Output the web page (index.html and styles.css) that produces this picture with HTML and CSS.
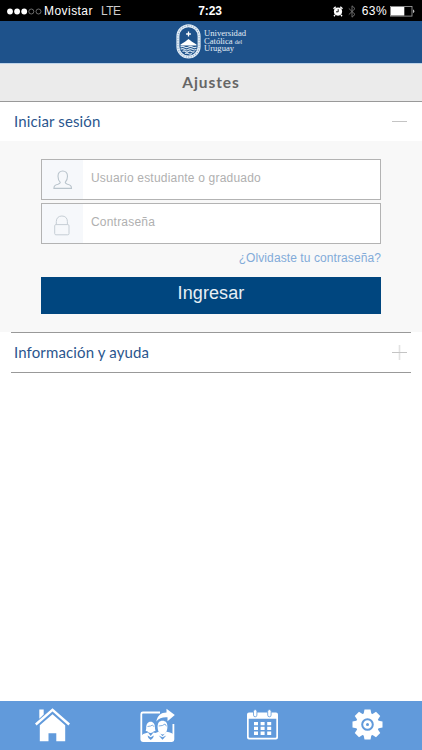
FILE: index.html
```html
<!DOCTYPE html>
<html lang="es">
<head>
    <title>Ajustes</title>
    <meta charset="UTF-8">
    <meta name="viewport" content="width=device-width, initial-scale=1">
    <link rel="stylesheet" href="styles.css">
</head>
<body>
    <div class="status-bar">
        <div class="status-left">
            <svg class="signal" width="35" height="7" viewBox="0 0 35 7">
                <g fill="#fff"><circle cx="3" cy="3.5" r="2.9"/><circle cx="10.1" cy="3.5" r="2.9"/><circle cx="17.2" cy="3.5" r="2.9"/></g>
                <g fill="none" stroke="#999" stroke-width=".7"><circle cx="24.3" cy="3.5" r="2.5"/><circle cx="31.5" cy="3.5" r="2.5"/></g>
            </svg>
            <span class="carrier">Movistar</span>
            <span class="network">LTE</span>
        </div>
        <span class="time">7:23</span>
        <div class="status-right">
            <svg class="alarm" width="10" height="11" viewBox="0 0 10 11">
                <circle cx="5" cy="5.6" r="4.1" fill="#fff"/>
                <path d="M.5 2.7 2.7.8M9.5 2.7 7.3.8M2 9 1 10.2M8 9l1 1.2" stroke="#fff" stroke-width="1.4"/>
                <path d="M5.2 3.2v2.6H3" fill="none" stroke="#000" stroke-width=".9"/>
            </svg>
            <svg class="bluetooth" width="8" height="13" viewBox="0 0 8 13">
                <path d="M.8 3.4 7 9.4 4 12.2V.8L7 3.6.8 9.6" fill="none" stroke="#777" stroke-width=".9"/>
            </svg>
            <span class="percent">63%</span>
            <svg class="battery" width="25" height="11" viewBox="0 0 25 11">
                <rect x=".4" y=".4" width="21.6" height="9.7" fill="none" stroke="#aaa" stroke-width=".8"/>
                <rect x="1" y="1" width="13.3" height="8.5" fill="#fff"/>
                <path d="M23 3.5q1.3.3 1.3 1.8T23 7z" fill="#bbb"/>
            </svg>
        </div>
    </div>

    <header class="header">
        <svg class="shield" width="25" height="35" viewBox="0 0 25 35">
            <rect x="1.9" y="1.7" width="21.2" height="31.4" rx="10.6" fill="none" stroke="#e3edf6" stroke-width="3"/>
            <rect x="1.9" y="1.7" width="21.2" height="31.4" rx="10.6" fill="none" stroke="#8eabc9" stroke-width="1.2" stroke-dasharray="1 1.5"/>
            <path d="M12.5 7.6v4.8M10.1 10h4.8" stroke="#fff" stroke-width="1.3"/>
            <path d="M4.5 20.5 9 17.7l3.5-2.6 3.5 2.6 4.500 2.800v.9h-16z" fill="#fff"/>
            <path d="M4.500 23q2-1.300 4 0t4 0 4 0 4 0M4.500 25.300q2-1.300 4 0t4 0 4 0 4 0M6.500 27.500q1.500-1.200 3 0t3 0 3 0 3 0M9 29.600q1.800-1 3.500 0t3.500 0" fill="none" stroke="#d6e4f1" stroke-width="1.1"/>
        </svg>
        <div class="brand">
            <span>Universidad</span>
            <span>Católica <small>del</small></span>
            <span>Uruguay</span>
        </div>
    </header>

    <h1 class="title">Ajustes</h1>

    <main>
        <div class="row">
            <h2>Iniciar sesión</h2>
            <svg width="15" height="15" viewBox="0 0 15 15"><path d="M0 7.5h15" stroke="#c4c4c4"/></svg>
        </div>
        <form class="login">
            <label class="field">
                <span class="field-icon">
                    <svg width="20" height="20" viewBox="0 0 20 20">
                        <path d="M7.3 12.3C5.5 10.7 5 8.7 5 6.3 5 3 6.9 1 9.7 1s4.8 2 4.8 5.300c0 2.400-.6 4.400-2.300 6 .1 1.200.7 1.500 2.300 2 2.800.8 4 1.200 4 4.100H.9c0-2.900 1.300-3.300 4.100-4.100 1.600-.5 2.200-.8 2.300-2z" fill="none" stroke="#b9c4cc" stroke-width="1.1"/>
                    </svg>
                </span>
                <input type="text" placeholder="Usuario estudiante o graduado">
            </label>
            <label class="field">
                <span class="field-icon lock">
                    <svg width="16" height="21" viewBox="0 0 16 21">
                        <rect x=".7" y="9.6" width="14.3" height="10.2" rx="1.2" fill="none" stroke="#c6ced5"/>
                        <path d="M2.3 9.600V6.600C2.300 3 4.600 1 7.900 1s5.500 2 5.500 5.600v3" fill="none" stroke="#c6ced5"/>
                    </svg>
                </span>
                <input type="password" placeholder="Contraseña">
            </label>
            <a class="forgot">¿Olvidaste tu contraseña?</a>
            <button type="button">Ingresar</button>
        </form>
        <div class="row help">
            <h2>Información y ayuda</h2>
            <svg width="15" height="15" viewBox="0 0 15 15"><path d="M7.5 0v15" stroke="#e2e2e2" stroke-width="1.6"/><path d="M0 7.5h15" stroke="#c4c4c4"/></svg>
        </div>
    </main>

    <nav class="tabs">
        <a>
            <svg width="35" height="34" viewBox="0 0 35 34" fill="#fff">
                <path d="M4.3 1.5h4.400v5L4.300 10.700z"/>
                <path d="M.8 16.500 17.500 1.800l16.700 14.700" fill="none" stroke="#fff" stroke-width="2.4"/>
                <path d="M4.800 17.300 17.500 6.200l12.700 11.100v15.900h-8.900v-7.900h-7.800v7.900H4.800z"/>
            </svg>
        </a>
        <a>
            <svg width="35" height="34" viewBox="0 0 35 34" fill="#fff">
                <path d="M20 4.500H2.900Q1.300 4.500 1.300 6v25.500q0 1.500 1.600 1.500h29q1.500 0 1.500-1.500V16" fill="none" stroke="#fff" stroke-width="1.8"/>
                <path d="M16.300 13.500c1.200-6 4.700-9 10.200-9V.7l8.300 6.200-7.300 6.400V9.300c-5-.3-8.500.8-11.200 4.200z"/>
                <path d="M6.200 20.500c0-4.500 1.600-6.700 4.400-6.700s4.400 2.200 4.400 6.700l.5 2.400q-2 0-2.600 1.300-2.300 1.600-4.600 0-.6-1.300-2.600-1.300z"/>
                <path d="M17.600 18.700c0-4 1.800-6 4.900-6s4.900 2 4.900 6c0 4.500-2 7.700-4.900 7.700s-4.900-3.200-4.900-7.700z"/>
                <path d="M7.500 18.500q3.700-.2 5-1.500l1.500 1.800M18.700 18q4.200 0 6.300-2l1.500 2.300" fill="none" stroke="#619adb" stroke-width=".8"/>
                <path d="M1.500 28q1-2.500 5-3l1.500-.5 2.700 3.500 2.700-3.500 2 .6 3.300-1.300 3.800 4.500 4-4.500q6 .8 7 3.200v6h-32z"/>
                <path d="M7.500 27.500q.3 3 3.200 4.500 2.900-1.500 3.200-4.500l-3.200 1.800zM18.700 27.500l3.800 4.300 3.800-4.300-3.800 1.800z" fill="#619adb"/>
            </svg>
        </a>
        <a>
            <svg width="31" height="32" viewBox="0 0 31 32">
                <path d="M2 3.500h27q2 0 2 2v23q0 2-2 2H2q-2 0-2-2v-23q0-2 2-2zM1.700 9.800v18q0 1 1 1h25.600q1 0 1-1v-18z" fill="#fff" fill-rule="evenodd"/>
                <g fill="#fff" stroke="#619adb" stroke-width=".8"><rect x="6.500" y=".6" width="3.4" height="7.2" rx="1.7"/><rect x="20.700" y=".6" width="3.4" height="7.2" rx="1.7"/></g>
                <path d="M7 13h4v3.300H7zm6.600 0h4v3.300h-4zm6.600 0h4v3.300h-4zM7 17.800h4v3.300H7zm6.600 0h4v3.300h-4zm6.600 0h4v3.300h-4zM7 22.600h4v3.300H7zm6.600 0h4v3.300h-4zm6.600 0h4v3.300h-4z" fill="#fff"/>
            </svg>
        </a>
        <a>
            <svg width="31" height="31" viewBox="-15.5 -15.5 31 31">
                <g fill="#fff">
                    <circle r="11.5"/>
                    <path id="tooth" d="M-3-15h6l1 5h-8z"/>
                    <use href="#tooth" transform="rotate(45)"/>
                    <use href="#tooth" transform="rotate(90)"/>
                    <use href="#tooth" transform="rotate(135)"/>
                    <use href="#tooth" transform="rotate(180)"/>
                    <use href="#tooth" transform="rotate(225)"/>
                    <use href="#tooth" transform="rotate(270)"/>
                    <use href="#tooth" transform="rotate(315)"/>
                </g>
                <circle r="5.3" fill="none" stroke="#619adb" stroke-width="2"/>
                <circle r="1.5" fill="#619adb"/>
            </svg>
        </a>
    </nav>
</body>
</html>
```
FILE: styles.css
```css
* {
    box-sizing: border-box;
}
body {
    margin: 0;
    height: 750px;
    display: flex;
    flex-direction: column;
    background-color: #fff;
    font-family: "Liberation Sans", Arial, sans-serif;
    overflow: hidden;
}
svg {
    display: block;
    flex-shrink: 0;
}
.status-bar {
    height: 21px;
    flex-shrink: 0;
    padding: 0 7px 0 7px;
    display: grid;
    grid-template-columns: 1fr auto 1fr;
    align-items: center;
    background-color: #000;
    color: #fff;
    font-size: 12px;
    line-height: 21px;
}
.status-left, .status-right {
    display: flex;
    align-items: center;
}
.status-left span, .percent {
    padding-top: 1px;
}
.status-right {
    justify-content: flex-end;
}
.carrier {
    margin-left: 2px;
    letter-spacing: 0.45px;
}
.network {
    margin-left: 8px;
    color: #ccc;
    letter-spacing: -0.5px;
}
.time {
    padding: 1px 2px 0 0;
    font-weight: bold;
    letter-spacing: -0.1px;
}
.bluetooth {
    margin-left: 5px;
}
.percent {
    margin: 0 3px 0 6px;
    letter-spacing: 0.4px;
}
.header {
    height: 43px;
    flex-shrink: 0;
    padding: 0 0 1px;
    display: flex;
    justify-content: center;
    align-items: center;
    background-color: #1e528b;
    border-bottom: 1px solid #bdd3e9;
}
.brand {
    margin-left: 3px;
    display: grid;
    grid-auto-rows: 7.5px;
    color: #e3edf6;
    font-family: "Liberation Serif", serif;
    font-size: 8.6px;
    line-height: 7.5px;
}
.brand small {
    font-size: 6px;
    line-height: 1;
}
.title {
    height: 38px;
    flex-shrink: 0;
    margin: 0;
    background-color: #ebebeb;
    border-bottom: 1px solid #999;
    color: #666;
    font-family: Lato, sans-serif;
    font-size: 15.5px;
    font-weight: bold;
    line-height: 36px;
    letter-spacing: 0.9px;
    text-align: center;
}
main {
    flex: 1;
}
.row {
    height: 39px;
    padding: 0 15px 0 14px;
    display: flex;
    justify-content: space-between;
    align-items: center;
}
.row h2 {
    margin: 0;
    padding-bottom: 2px;
    color: #2b568e;
    font-family: Lato, sans-serif;
    font-size: 15px;
    font-weight: normal;
    letter-spacing: 0.13px;
}
.help {
    height: 41px;
    margin: 0 11px;
    padding: 0 4px 0 3px;
    border-top: 1px solid #999;
    border-bottom: 1px solid #999;
}
.login {
    height: 191px;
    padding: 18px 41px 0;
    display: flex;
    flex-direction: column;
    background-color: #f8f8f8;
}
.field {
    height: 41px;
    margin-bottom: 3px;
    display: flex;
    background-color: #fff;
    border: 1px solid #b3b3b3;
}
.field-icon {
    width: 41px;
    padding-left: 1px;
    display: flex;
    justify-content: center;
    align-items: center;
    background-color: #f6f8fb;
}
.lock {
    padding: 3px 1px 0 0;
}
.field input {
    flex: 1;
    min-width: 0;
    margin: 0;
    padding: 0 8px 3px;
    border: none;
    background: none;
    font-family: "Liberation Sans", Arial, sans-serif;
    font-size: 12px;
    letter-spacing: 0.2px;
}
.field input::placeholder {
    color: #b0b0b0;
}
.forgot {
    align-self: flex-end;
    margin-top: 4px;
    color: #82abd9;
    font-size: 12px;
    line-height: 15px;
    letter-spacing: 0.09px;
}
button {
    height: 37px;
    margin-top: 11px;
    padding: 0 0 4px;
    border: none;
    background-color: #00467f;
    color: #e8eff5;
    font-family: "Liberation Sans", Arial, sans-serif;
    font-size: 18px;
    letter-spacing: 0.1px;
}
.tabs {
    height: 49px;
    flex-shrink: 0;
    padding: 0 2px 2px 0;
    display: flex;
    background-color: #619adb;
}
.tabs a {
    flex: 1;
    display: flex;
    justify-content: center;
    align-items: center;
}
```
